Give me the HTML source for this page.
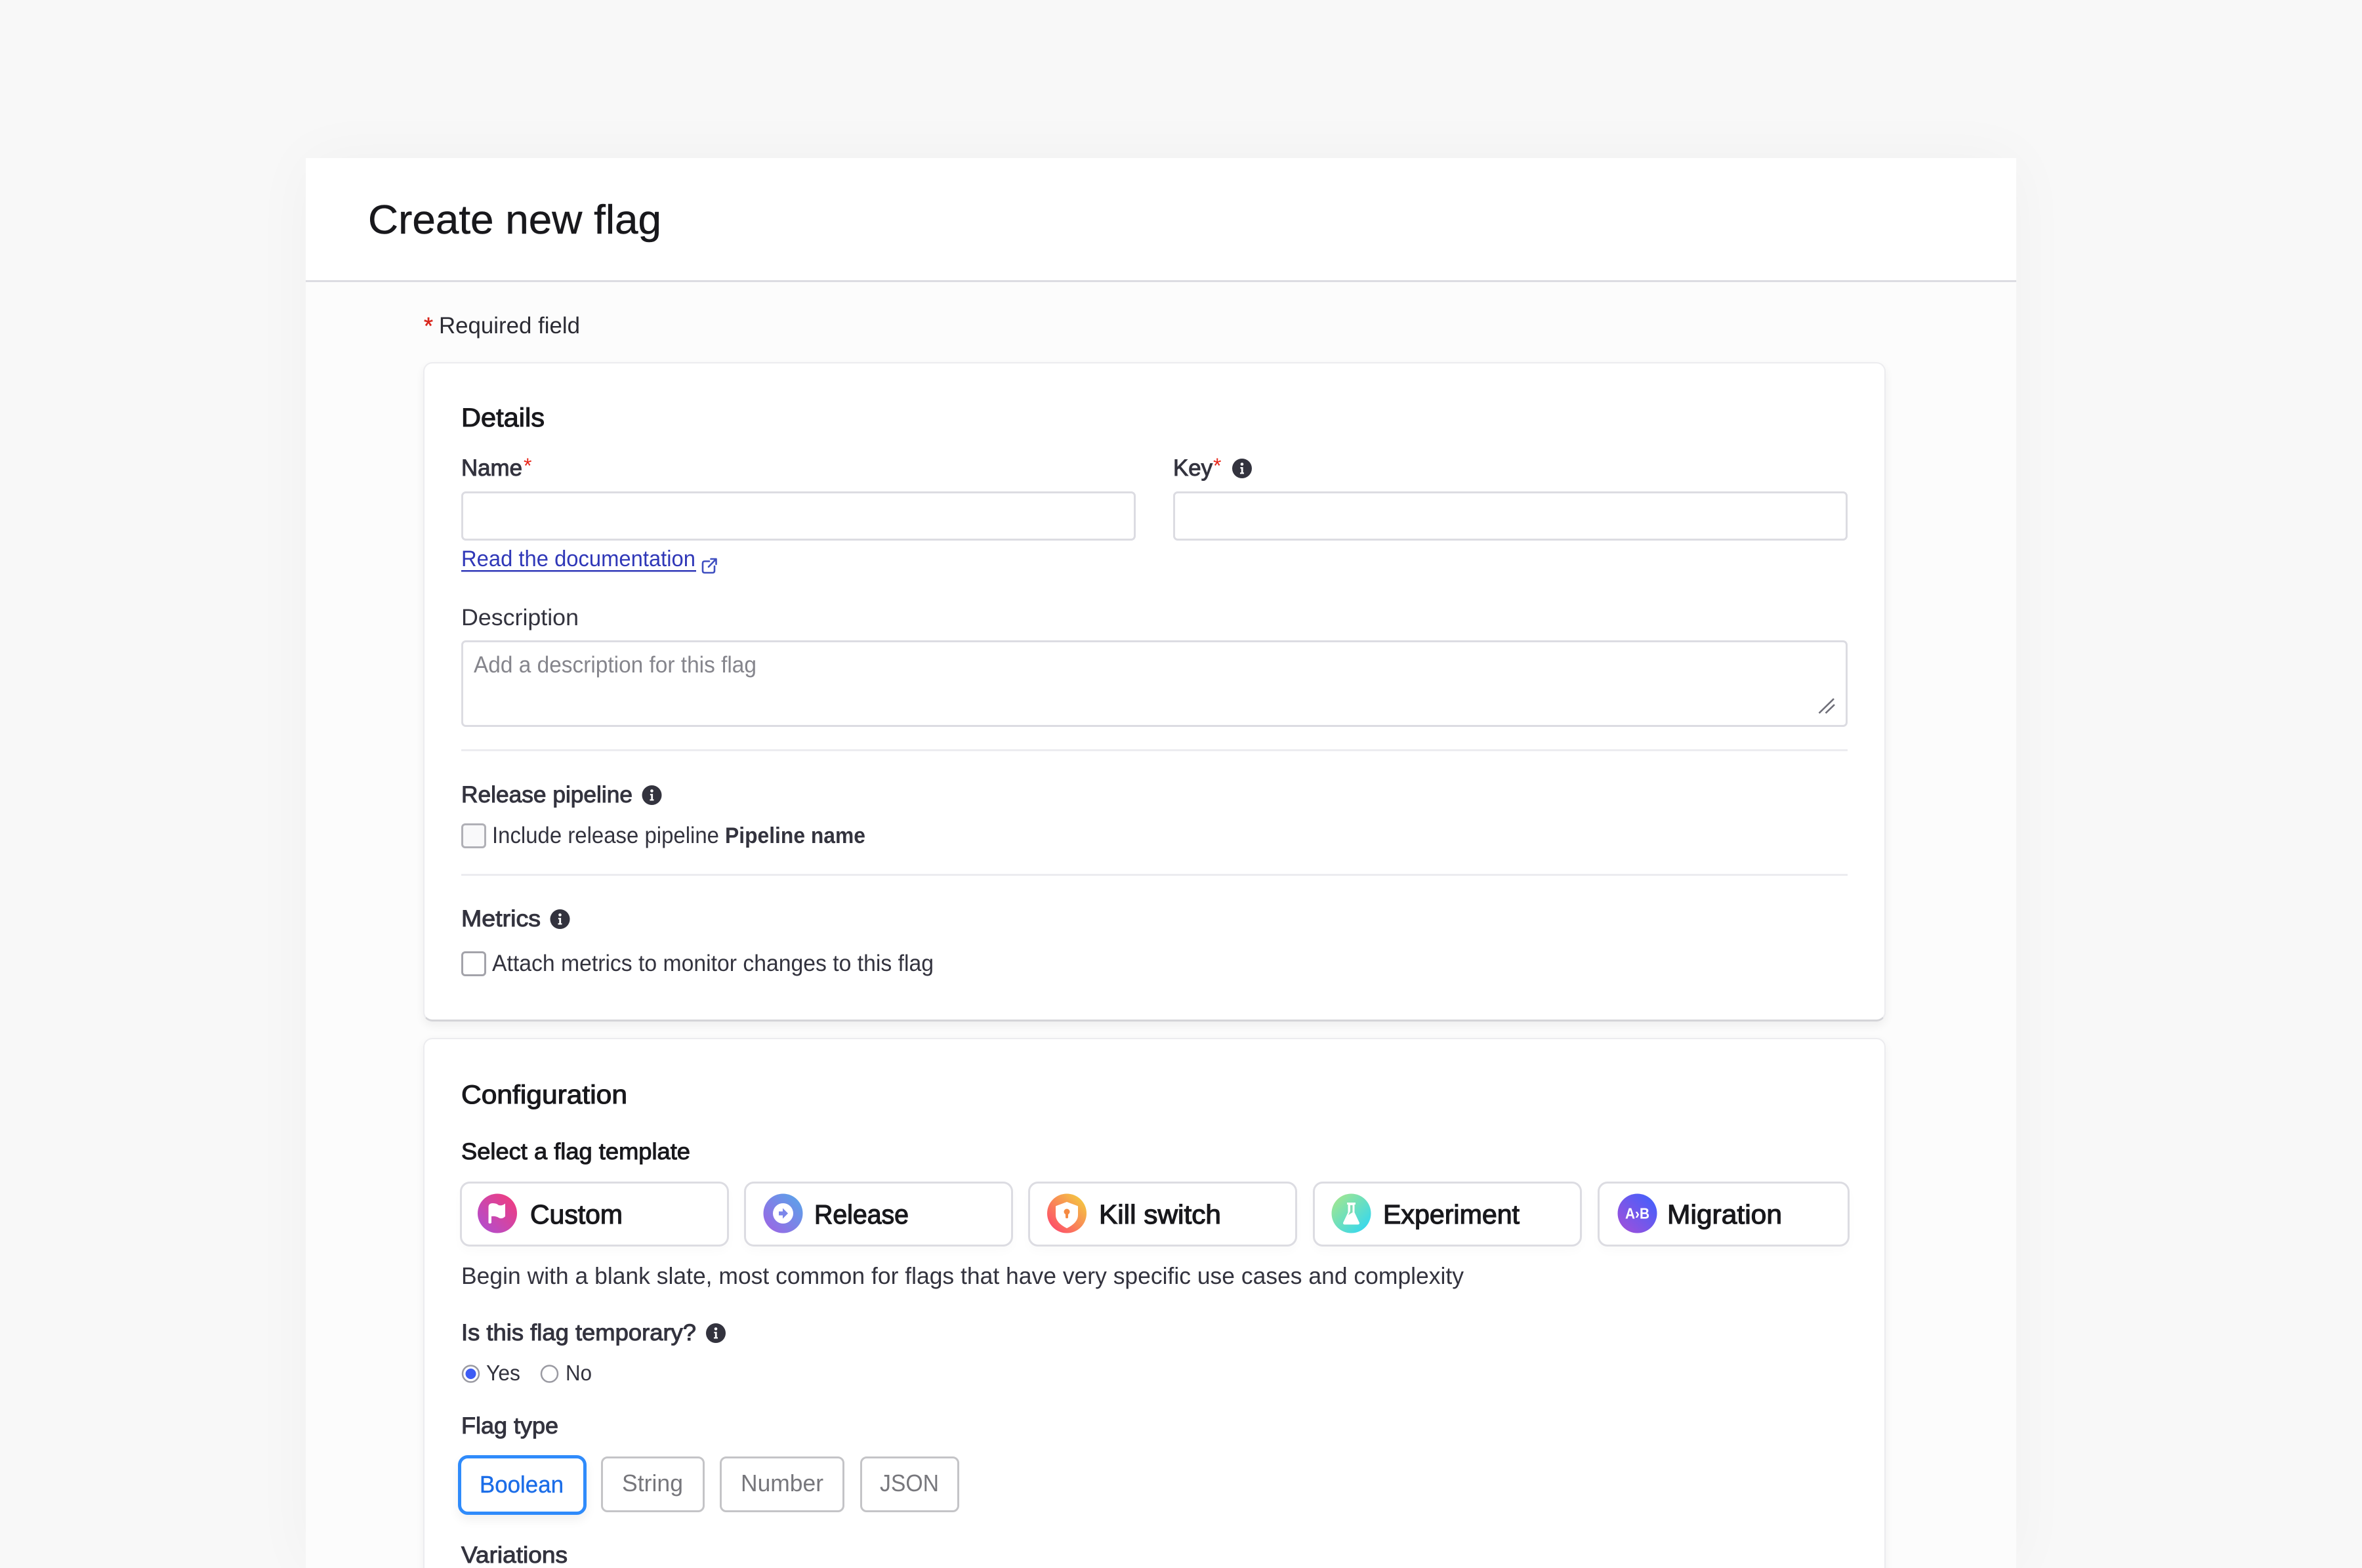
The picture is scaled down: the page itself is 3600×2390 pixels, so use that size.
<!DOCTYPE html>
<html lang="en"><head><meta charset="utf-8"><title>Create new flag</title>
<style>
html,body{margin:0;padding:0;width:3600px;height:2390px;overflow:hidden;background:#f8f8f8}
#w{position:relative;left:0;top:0;width:3600px;height:2390px;overflow:hidden;background:#f8f8f8}
#w div{position:absolute;box-sizing:border-box}
svg{position:absolute;left:0;top:0}
text{font-family:"Liberation Sans",sans-serif;font-size:35px;fill:#33333e}
.h{fill:#18181c;stroke:#18181c;stroke-width:1.1px;font-size:40px}
.m{stroke:#33333e;stroke-width:1px}
.b{font-weight:700}
.tp{fill:#18181c;stroke:#18181c;stroke-width:1.2px;font-size:41px}
.g{fill:#85858c;font-size:35px}
</style></head><body><div id="w">
<div style="left:466px;top:241px;width:2607px;height:2149px;background:#fcfcfc;box-shadow:0 0 90px rgba(0,0,0,.035)"></div>
<div style="left:466px;top:241px;width:2607px;height:189px;background:#fff;border-bottom:3px solid #dcdce2"></div>
<div style="left:645px;top:552px;width:2229px;height:1005px;background:#fff;border-radius:14px;border:2px solid #ececef;border-bottom:3px solid #d4d4d8;box-shadow:0 6px 14px rgba(0,0,0,.06)"></div>
<div style="left:645px;top:1582px;width:2229px;height:900px;background:#fff;border-radius:14px;border:2px solid #ececef;box-shadow:0 4px 14px rgba(0,0,0,.05)"></div>
<div style="left:703px;top:749px;width:1028px;height:75px;background:#fff;border:3px solid #dcdce2;border-radius:7px"></div>
<div style="left:1788px;top:749px;width:1028px;height:75px;background:#fff;border:3px solid #dcdce2;border-radius:7px"></div>
<div style="left:703px;top:976px;width:2113px;height:132px;background:#fff;border:3px solid #dcdce2;border-radius:7px"></div>
<div style="left:703px;top:1142px;width:2113px;height:3px;background:#ececf0"></div>
<div style="left:703px;top:1332px;width:2113px;height:3px;background:#ececf0"></div>
<div style="left:703px;top:1255px;width:38px;height:38px;background:#f9f9fa;border:3px solid #b0b0b6;border-radius:6px"></div>
<div style="left:703px;top:1450px;width:38px;height:38px;background:#fff;border:3px solid #a3a3aa;border-radius:6px"></div>
<div style="left:701px;top:1801px;width:410px;height:99px;background:#fff;border:3px solid #dcdce2;border-radius:15px;box-shadow:0 8px 14px rgba(0,0,0,.02)"></div>
<div style="left:1134px;top:1801px;width:410px;height:99px;background:#fff;border:3px solid #dcdce2;border-radius:15px;box-shadow:0 8px 14px rgba(0,0,0,.02)"></div>
<div style="left:1567px;top:1801px;width:410px;height:99px;background:#fff;border:3px solid #dcdce2;border-radius:15px;box-shadow:0 8px 14px rgba(0,0,0,.02)"></div>
<div style="left:2001px;top:1801px;width:410px;height:99px;background:#fff;border:3px solid #dcdce2;border-radius:15px;box-shadow:0 8px 14px rgba(0,0,0,.02)"></div>
<div style="left:2435px;top:1801px;width:384px;height:99px;background:#fff;border:3px solid #dcdce2;border-radius:15px;box-shadow:0 8px 14px rgba(0,0,0,.02)"></div>
<div style="left:698px;top:2218px;width:196px;height:91px;background:#fff;border:5px solid #2f8bfb;border-radius:15px;box-shadow:0 8px 16px rgba(0,0,0,.06)"></div>
<div style="left:916px;top:2220px;width:158px;height:85px;background:#fff;border:3px solid #c4c4c7;border-radius:10px"></div>
<div style="left:1097px;top:2220px;width:190px;height:85px;background:#fff;border:3px solid #c4c4c7;border-radius:10px"></div>
<div style="left:1311px;top:2220px;width:151px;height:85px;background:#fff;border:3px solid #c4c4c7;border-radius:10px"></div>

<svg width="3600" height="2390" viewBox="0 0 3600 2390" xmlns="http://www.w3.org/2000/svg">
<defs>
<linearGradient id="gc" x1="1" y1="0" x2="0" y2="1"><stop offset="0" stop-color="#f53b78"/><stop offset="1" stop-color="#ac4fd6"/></linearGradient>
<linearGradient id="gr" x1="1" y1="0" x2="0" y2="1"><stop offset="0" stop-color="#55a8ea"/><stop offset="1" stop-color="#a161e4"/></linearGradient>
<linearGradient id="gk" x1="1" y1="0" x2="0" y2="1"><stop offset="0" stop-color="#f2d83c"/><stop offset="1" stop-color="#ff3b70"/></linearGradient>
<linearGradient id="ge" x1="0" y1="0" x2="1" y2="1"><stop offset="0" stop-color="#ace885"/><stop offset="1" stop-color="#28d6fb"/></linearGradient>
<linearGradient id="gm" x1="1" y1="0" x2="0" y2="1"><stop offset="0" stop-color="#3b62ff"/><stop offset="1" stop-color="#a74ed8"/></linearGradient>
<g id="info"><circle r="15" fill="#33333e"/><circle cy="-6.5" r="2.3" fill="#fff"/><path d="M-2.6-2H1.6V6.2H3V8.4H-3V6.2H-1.2V.2H-2.6Z" fill="#fff"/></g>
</defs>

<text x="561" y="356" style="font-size:62px;fill:#18181c;stroke:#18181c;stroke-width:.5px" textLength="447" lengthAdjust="spacingAndGlyphs">Create new flag</text>
<text x="646" y="509" style="fill:#d9261c;font-size:36px;stroke:#d9261c;stroke-width:.5px">*</text>
<text x="669" y="508" textLength="215" lengthAdjust="spacingAndGlyphs" style="fill:#2b2b33">Required field</text>

<text x="703" y="650" class="h" textLength="127" lengthAdjust="spacingAndGlyphs">Details</text>
<text x="703" y="725" class="m" textLength="93" lengthAdjust="spacingAndGlyphs">Name</text>
<text x="798" y="721" style="fill:#e8281c;font-size:32px">*</text>
<text x="1788" y="725" class="m" textLength="60" lengthAdjust="spacingAndGlyphs">Key</text>
<text x="1849" y="721" style="fill:#e8281c;font-size:32px">*</text>
<use href="#info" x="1893" y="714"/>

<text x="703" y="863" textLength="357" lengthAdjust="spacingAndGlyphs" style="fill:#3038b8;font-size:34px">Read the documentation</text>
<rect x="703" y="869" width="358" height="2.5" fill="#3038b8"/>
<g fill="none" stroke="#3f4fc0" stroke-width="2.6" stroke-linecap="round" stroke-linejoin="round"><path d="M1081 855.5H1074Q1071 855.5 1071 858.5V870Q1071 873 1074 873H1086Q1089 873 1089 870V863"/><path d="M1080 864L1091 852.5M1083.5 852H1091.5V860"/></g>

<text x="703" y="953" textLength="179" lengthAdjust="spacingAndGlyphs">Description</text>
<text x="722" y="1025" class="g" textLength="431" lengthAdjust="spacingAndGlyphs">Add a description for this flag</text>
<g stroke="#6e6e78" stroke-width="2.6" stroke-linecap="butt"><path d="M2772.5 1087L2795 1065"/><path d="M2782.5 1087L2796 1074"/></g>

<text x="703" y="1223" class="m" textLength="261" lengthAdjust="spacingAndGlyphs">Release pipeline</text>
<use href="#info" x="993.500" y="1212"/>
<text x="750" y="1285" textLength="346" lengthAdjust="spacingAndGlyphs">Include release pipeline</text>
<text x="1105" y="1285" class="b" textLength="214" lengthAdjust="spacingAndGlyphs" style="fill:#33333e;font-size:34px">Pipeline name</text>
<text x="703" y="1412" class="m" textLength="121" lengthAdjust="spacingAndGlyphs">Metrics</text>
<use href="#info" x="853.500" y="1401"/>
<text x="750" y="1480" textLength="673" lengthAdjust="spacingAndGlyphs">Attach metrics to monitor changes to this flag</text>

<text x="703" y="1682" class="h" textLength="253" lengthAdjust="spacingAndGlyphs">Configuration</text>
<text x="703" y="1767" class="m" style="fill:#18181c;stroke:#18181c" textLength="349" lengthAdjust="spacingAndGlyphs">Select a flag template</text>

<circle cx="758" cy="1849.500" r="30" fill="url(#gc)"/>
<path d="M744.500 1864V1840Q744.500 1834 751 1834Q757 1834 760 1837Q765 1838.500 770 1834.500V1854Q765 1859 760 1856Q755 1853 749 1854V1864Q746.500 1866 744.500 1864Z" fill="#fff"/>
<text x="808" y="1865" class="tp" textLength="141" lengthAdjust="spacingAndGlyphs">Custom</text>

<circle cx="1193.500" cy="1849.500" r="30" fill="url(#gr)"/>
<circle cx="1193.500" cy="1849.500" r="15.500" fill="#fff"/>
<path d="M1187 1846.500H1193V1841.500L1201 1849.500L1193 1857.500V1852.500H1187Z" fill="#7b86ea"/>
<text x="1241" y="1865" class="tp" textLength="144" lengthAdjust="spacingAndGlyphs">Release</text>

<circle cx="1626" cy="1849.500" r="30" fill="url(#gk)"/>
<path d="M1626 1833L1642 1839V1852Q1642 1863 1626 1871Q1610 1863 1610 1852V1839Z" fill="#fff" stroke="#fff" stroke-width="2" stroke-linejoin="round"/>
<circle cx="1626" cy="1847" r="4.500" fill="#f58a42"/><rect x="1624" y="1848" width="4" height="9" rx="1.500" fill="#f58a42"/>
<text x="1675" y="1865" class="tp" textLength="186" lengthAdjust="spacingAndGlyphs">Kill switch</text>

<circle cx="2059.500" cy="1849.500" r="30" fill="url(#ge)"/>
<path d="M2053 1833H2066V1836H2064.500V1848L2072 1864Q2072 1866.500 2069.500 1866.500H2049.500Q2047 1866.500 2047 1864L2054.500 1848V1836H2053Z" fill="#fff"/>
<path d="M2058 1837H2061.500V1848L2055 1852L2058 1846Z" fill="#7fdcb4"/>
<text x="2108" y="1865" class="tp" textLength="208" lengthAdjust="spacingAndGlyphs">Experiment</text>

<circle cx="2495.500" cy="1849.500" r="30" fill="url(#gm)"/>
<text x="2477" y="1857.500" class="b" textLength="37" lengthAdjust="spacingAndGlyphs" style="fill:#fff;font-size:23px">A›B</text>
<text x="2541" y="1865" class="tp" textLength="175" lengthAdjust="spacingAndGlyphs">Migration</text>

<text x="703" y="1957" textLength="1528" lengthAdjust="spacingAndGlyphs" style="font-size:36px">Begin with a blank slate, most common for flags that have very specific use cases and complexity</text>

<text x="703" y="2043" class="m" textLength="358" lengthAdjust="spacingAndGlyphs">Is this flag temporary?</text>
<use href="#info" x="1091" y="2032"/>
<circle cx="717.500" cy="2094" r="12.500" fill="#fff" stroke="#9a9aa2" stroke-width="2.500"/>
<circle cx="717.500" cy="2094" r="8" fill="#3d5cf5"/>
<text x="741" y="2104" textLength="52" lengthAdjust="spacingAndGlyphs" style="font-size:33px">Yes</text>
<circle cx="837.500" cy="2094" r="12.500" fill="#fff" stroke="#9a9aa2" stroke-width="2.500"/>
<text x="862" y="2104" textLength="40" lengthAdjust="spacingAndGlyphs" style="font-size:33px">No</text>

<text x="703" y="2185" class="m" textLength="148" lengthAdjust="spacingAndGlyphs">Flag type</text>
<text x="731" y="2275" textLength="128" lengthAdjust="spacingAndGlyphs" style="fill:#1b6de8;stroke:#1b6de8;stroke-width:.4px;font-size:36px">Boolean</text>
<text x="948" y="2273" textLength="93" lengthAdjust="spacingAndGlyphs" style="fill:#77777c;font-size:36px">String</text>
<text x="1129" y="2273" textLength="126" lengthAdjust="spacingAndGlyphs" style="fill:#77777c;font-size:36px">Number</text>
<text x="1341" y="2273" textLength="90" lengthAdjust="spacingAndGlyphs" style="fill:#77777c;font-size:36px">JSON</text>
<text x="703" y="2382" class="m" textLength="162" lengthAdjust="spacingAndGlyphs">Variations</text>
</svg>
</div></body></html>
